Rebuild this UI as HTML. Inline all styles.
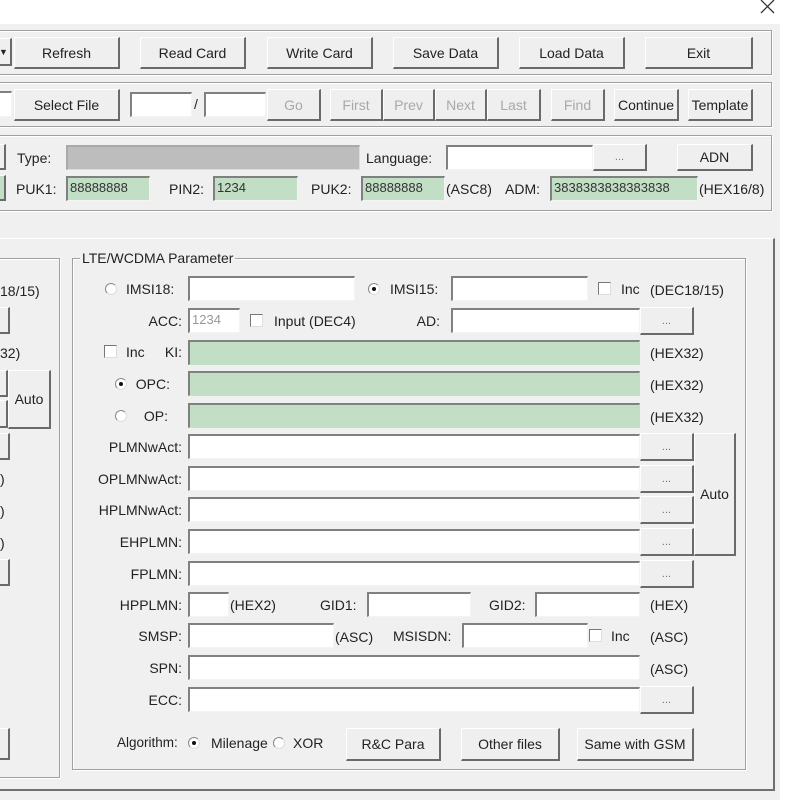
<!DOCTYPE html>
<html><head><meta charset="utf-8"><style>
*{box-sizing:border-box;margin:0;padding:0}
body{width:800px;height:800px;background:#fff;position:relative;overflow:hidden;font-family:"Liberation Sans",sans-serif;font-size:14px;color:#222}
.a{position:absolute}
.dlg{left:0;top:24px;width:780px;height:776px;background:#f0f0f0}
.pnl{border:1px solid #a0a0a0;box-shadow:inset 1px 1px 0 #fff,1px 1px 0 #fff}
.btn{position:absolute;background:#efefef;border-top:1px solid #fff;border-left:1px solid #fff;border-right:2px solid #6a6a6a;border-bottom:2px solid #6a6a6a;display:flex;align-items:center;justify-content:center;white-space:nowrap;color:#222}
.dis{color:#a8a8a8}
.in{position:absolute;background:#fff;border-top:2px solid #808080;border-left:2px solid #808080;border-right:1px solid #f4f4f4;border-bottom:1px solid #f4f4f4;font-size:13px;padding-left:2px;line-height:20px;color:#333}
.g{background:#c2dfc6}
.gy{background:#bdbdbd}
.t{position:absolute;white-space:nowrap;line-height:16px}
.r{text-align:right}
.rad{position:absolute;width:12px;height:12px;border-radius:50%;border:1px solid #888;border-right-color:#ddd;border-bottom-color:#ddd;background:#fff}
.rad.on::after{content:"";position:absolute;left:3px;top:3px;width:4px;height:4px;border-radius:50%;background:#111}
.cb{position:absolute;width:13px;height:13px;background:#fff;border-top:1px solid #777;border-left:1px solid #777;border-right:1px solid #ddd;border-bottom:1px solid #ddd}
.dots{font-size:11px;color:#777}
</style></head><body>
<svg class="a" style="left:760px;top:0px" width="16" height="14"><path d="M1 0L14 13M14 0L1 13" stroke="#333" stroke-width="1.3" fill="none"/></svg>
<div class="a dlg"></div>

<!-- toolbar 1 -->
<div class="a pnl" style="left:-2px;top:30px;width:774px;height:45px"></div>
<div class="btn" style="left:-4px;top:38px;width:16px;height:28px;font-size:9px">▼</div>
<div class="btn" style="left:14px;top:37px;width:106px;height:32px">Refresh</div>
<div class="btn" style="left:140px;top:37px;width:106px;height:32px">Read Card</div>
<div class="btn" style="left:267px;top:37px;width:106px;height:32px">Write Card</div>
<div class="btn" style="left:393px;top:37px;width:106px;height:32px">Save Data</div>
<div class="btn" style="left:519px;top:37px;width:106px;height:32px">Load Data</div>
<div class="btn" style="left:645px;top:37px;width:108px;height:32px">Exit</div>

<!-- toolbar 2 -->
<div class="a pnl" style="left:-2px;top:82px;width:774px;height:45px"></div>
<div class="in" style="left:-4px;top:91px;width:16px;height:26px"></div>
<div class="btn" style="left:14px;top:89px;width:106px;height:32px">Select File</div>
<div class="in" style="left:130px;top:92px;width:62px;height:25px"></div>
<div class="t" style="left:194px;top:96px">/</div>
<div class="in" style="left:204px;top:92px;width:62px;height:25px"></div>
<div class="btn dis" style="left:267px;top:89px;width:54px;height:32px">Go</div>
<div class="btn dis" style="left:330px;top:89px;width:53px;height:32px">First</div>
<div class="btn dis" style="left:383px;top:89px;width:52px;height:32px">Prev</div>
<div class="btn dis" style="left:435px;top:89px;width:52px;height:32px">Next</div>
<div class="btn dis" style="left:487px;top:89px;width:54px;height:32px">Last</div>
<div class="btn dis" style="left:551px;top:89px;width:54px;height:32px">Find</div>
<div class="btn" style="left:614px;top:89px;width:65px;height:32px">Continue</div>
<div class="btn" style="left:688px;top:89px;width:65px;height:32px">Template</div>

<!-- panel 3 -->
<div class="a pnl" style="left:-2px;top:135px;width:774px;height:76px"></div>
<div class="btn" style="left:-4px;top:144px;width:10px;height:26px"></div>
<div class="btn" style="left:-4px;top:175px;width:10px;height:26px;background:#c2dfc6"></div>
<div class="t" style="left:17px;top:150px">Type:</div>
<div class="in gy" style="left:66px;top:145px;width:294px;height:25px;border-color:#a9a9a9 #ddd #ddd #a9a9a9"></div>
<div class="t" style="left:366px;top:150px">Language:</div>
<div class="in" style="left:446px;top:145px;width:147px;height:25px"></div>
<div class="btn dots" style="left:593px;top:144px;width:54px;height:27px">...</div>
<div class="btn" style="left:677px;top:144px;width:76px;height:27px">ADN</div>
<div class="t" style="left:16px;top:181px">PUK1:</div>
<div class="in g" style="left:66px;top:176px;width:84px;height:25px">88888888</div>
<div class="t" style="left:169px;top:181px">PIN2:</div>
<div class="in g" style="left:213px;top:176px;width:85px;height:25px">1234</div>
<div class="t" style="left:311px;top:181px">PUK2:</div>
<div class="in g" style="left:361px;top:176px;width:84px;height:25px">88888888</div>
<div class="t" style="left:446px;top:181px">(ASC8)</div>
<div class="t" style="left:505px;top:181px">ADM:</div>
<div class="in g" style="left:550px;top:176px;width:148px;height:25px">3838383838383838</div>
<div class="t" style="left:699px;top:181px">(HEX16/8)</div>

<!-- main panel -->
<div class="a" style="left:-2px;top:238px;width:777px;height:553px;border-right:2px solid #707070;border-bottom:2px solid #707070;border-top:1px solid #fff"></div>
<div class="a pnl" style="left:-2px;top:258px;width:62px;height:520px"></div>
<div class="t" style="left:0px;top:283px">18/15)</div>
<div class="btn" style="left:-4px;top:307px;width:14px;height:27px"></div>
<div class="t" style="left:0px;top:345px">32)</div>
<div class="btn" style="left:-4px;top:370px;width:12px;height:27px"></div>
<div class="btn" style="left:-4px;top:400px;width:12px;height:28px"></div>
<div class="btn" style="left:8px;top:370px;width:43px;height:59px">Auto</div>
<div class="btn" style="left:-4px;top:433px;width:14px;height:27px"></div>
<div class="t" style="left:0px;top:471px">)</div>
<div class="t" style="left:0px;top:503px">)</div>
<div class="t" style="left:0px;top:535px">)</div>
<div class="btn" style="left:-4px;top:559px;width:14px;height:27px"></div>
<div class="btn" style="left:-4px;top:728px;width:14px;height:32px"></div>

<div class="a pnl" style="left:72px;top:258px;width:674px;height:512px"></div>
<div class="t" style="left:80px;top:250px;background:#f0f0f0;padding:0 2px">LTE/WCDMA Parameter</div>

<div class="rad" style="left:105px;top:283px"></div>
<div class="t" style="left:126px;top:281px">IMSI18:</div>
<div class="in" style="left:188px;top:276px;width:167px;height:25px"></div>
<div class="rad on" style="left:368px;top:283px"></div>
<div class="t" style="left:390px;top:281px">IMSI15:</div>
<div class="in" style="left:451px;top:276px;width:137px;height:25px"></div>
<div class="cb" style="left:598px;top:282px"></div>
<div class="t" style="left:621px;top:281px">Inc</div>
<div class="t" style="left:650px;top:282px">(DEC18/15)</div>

<div class="t r" style="left:100px;width:82px;top:313px">ACC:</div>
<div class="in" style="left:188px;top:308px;width:52px;height:25px;color:#999">1234</div>
<div class="cb" style="left:250px;top:314px"></div>
<div class="t" style="left:274px;top:313px">Input (DEC4)</div>
<div class="t r" style="left:380px;width:60px;top:313px">AD:</div>
<div class="in" style="left:451px;top:308px;width:189px;height:25px"></div>
<div class="btn dots" style="left:640px;top:307px;width:54px;height:28px">...</div>

<div class="cb" style="left:104px;top:345px"></div>
<div class="t" style="left:126px;top:344px">Inc</div>
<div class="t r" style="left:140px;width:42px;top:344px">KI:</div>
<div class="in g" style="left:188px;top:340px;width:452px;height:25px;border-color:#808080 #c2dfc6 #c2dfc6 #808080"></div>
<div class="t" style="left:650px;top:345px">(HEX32)</div>

<div class="rad on" style="left:115px;top:378px"></div>
<div class="t r" style="left:120px;width:50px;top:376px">OPC:</div>
<div class="in g" style="left:188px;top:371px;width:452px;height:25px;border-color:#808080 #c2dfc6 #c2dfc6 #808080"></div>
<div class="t" style="left:650px;top:377px">(HEX32)</div>

<div class="rad" style="left:115px;top:410px"></div>
<div class="t r" style="left:120px;width:48px;top:408px">OP:</div>
<div class="in g" style="left:188px;top:403px;width:452px;height:25px;border-color:#808080 #c2dfc6 #c2dfc6 #808080"></div>
<div class="t" style="left:650px;top:409px">(HEX32)</div>

<div class="t r" style="left:80px;width:102px;top:439px">PLMNwAct:</div>
<div class="in" style="left:188px;top:434px;width:452px;height:25px"></div>
<div class="btn dots" style="left:640px;top:433px;width:54px;height:28px">...</div>
<div class="t r" style="left:80px;width:102px;top:471px">OPLMNwAct:</div>
<div class="in" style="left:188px;top:466px;width:452px;height:25px"></div>
<div class="btn dots" style="left:640px;top:465px;width:54px;height:28px">...</div>
<div class="t r" style="left:80px;width:102px;top:502px">HPLMNwAct:</div>
<div class="in" style="left:188px;top:497px;width:452px;height:25px"></div>
<div class="btn dots" style="left:640px;top:496px;width:54px;height:28px">...</div>
<div class="t r" style="left:80px;width:102px;top:534px">EHPLMN:</div>
<div class="in" style="left:188px;top:529px;width:452px;height:25px"></div>
<div class="btn dots" style="left:640px;top:528px;width:54px;height:28px">...</div>
<div class="btn" style="left:694px;top:433px;width:42px;height:123px">Auto</div>
<div class="t r" style="left:80px;width:102px;top:566px">FPLMN:</div>
<div class="in" style="left:188px;top:561px;width:452px;height:25px"></div>
<div class="btn dots" style="left:640px;top:560px;width:54px;height:28px">...</div>

<div class="t r" style="left:80px;width:102px;top:597px">HPPLMN:</div>
<div class="in" style="left:188px;top:592px;width:41px;height:25px"></div>
<div class="t" style="left:230px;top:597px">(HEX2)</div>
<div class="t" style="left:320px;top:597px">GID1:</div>
<div class="in" style="left:367px;top:592px;width:104px;height:25px"></div>
<div class="t" style="left:489px;top:597px">GID2:</div>
<div class="in" style="left:535px;top:592px;width:105px;height:25px"></div>
<div class="t" style="left:650px;top:597px">(HEX)</div>

<div class="t r" style="left:80px;width:102px;top:628px">SMSP:</div>
<div class="in" style="left:188px;top:623px;width:146px;height:25px"></div>
<div class="t" style="left:335px;top:629px">(ASC)</div>
<div class="t" style="left:393px;top:628px">MSISDN:</div>
<div class="in" style="left:462px;top:623px;width:126px;height:25px"></div>
<div class="cb" style="left:589px;top:629px"></div>
<div class="t" style="left:611px;top:628px">Inc</div>
<div class="t" style="left:650px;top:629px">(ASC)</div>

<div class="t r" style="left:80px;width:102px;top:660px">SPN:</div>
<div class="in" style="left:188px;top:655px;width:452px;height:25px"></div>
<div class="t" style="left:650px;top:661px">(ASC)</div>
<div class="t r" style="left:80px;width:102px;top:692px">ECC:</div>
<div class="in" style="left:188px;top:687px;width:452px;height:25px"></div>
<div class="btn dots" style="left:640px;top:686px;width:54px;height:28px">...</div>

<div class="t" style="left:117px;top:735px;font-size:13.5px">Algorithm:</div>
<div class="rad on" style="left:188px;top:737px"></div>
<div class="t" style="left:211px;top:735px">Milenage</div>
<div class="rad" style="left:273px;top:737px"></div>
<div class="t" style="left:293px;top:735px">XOR</div>
<div class="btn" style="left:346px;top:728px;width:95px;height:33px">R&amp;C Para</div>
<div class="btn" style="left:461px;top:728px;width:99px;height:33px">Other files</div>
<div class="btn" style="left:577px;top:728px;width:117px;height:33px">Same with GSM</div>
</body></html>
